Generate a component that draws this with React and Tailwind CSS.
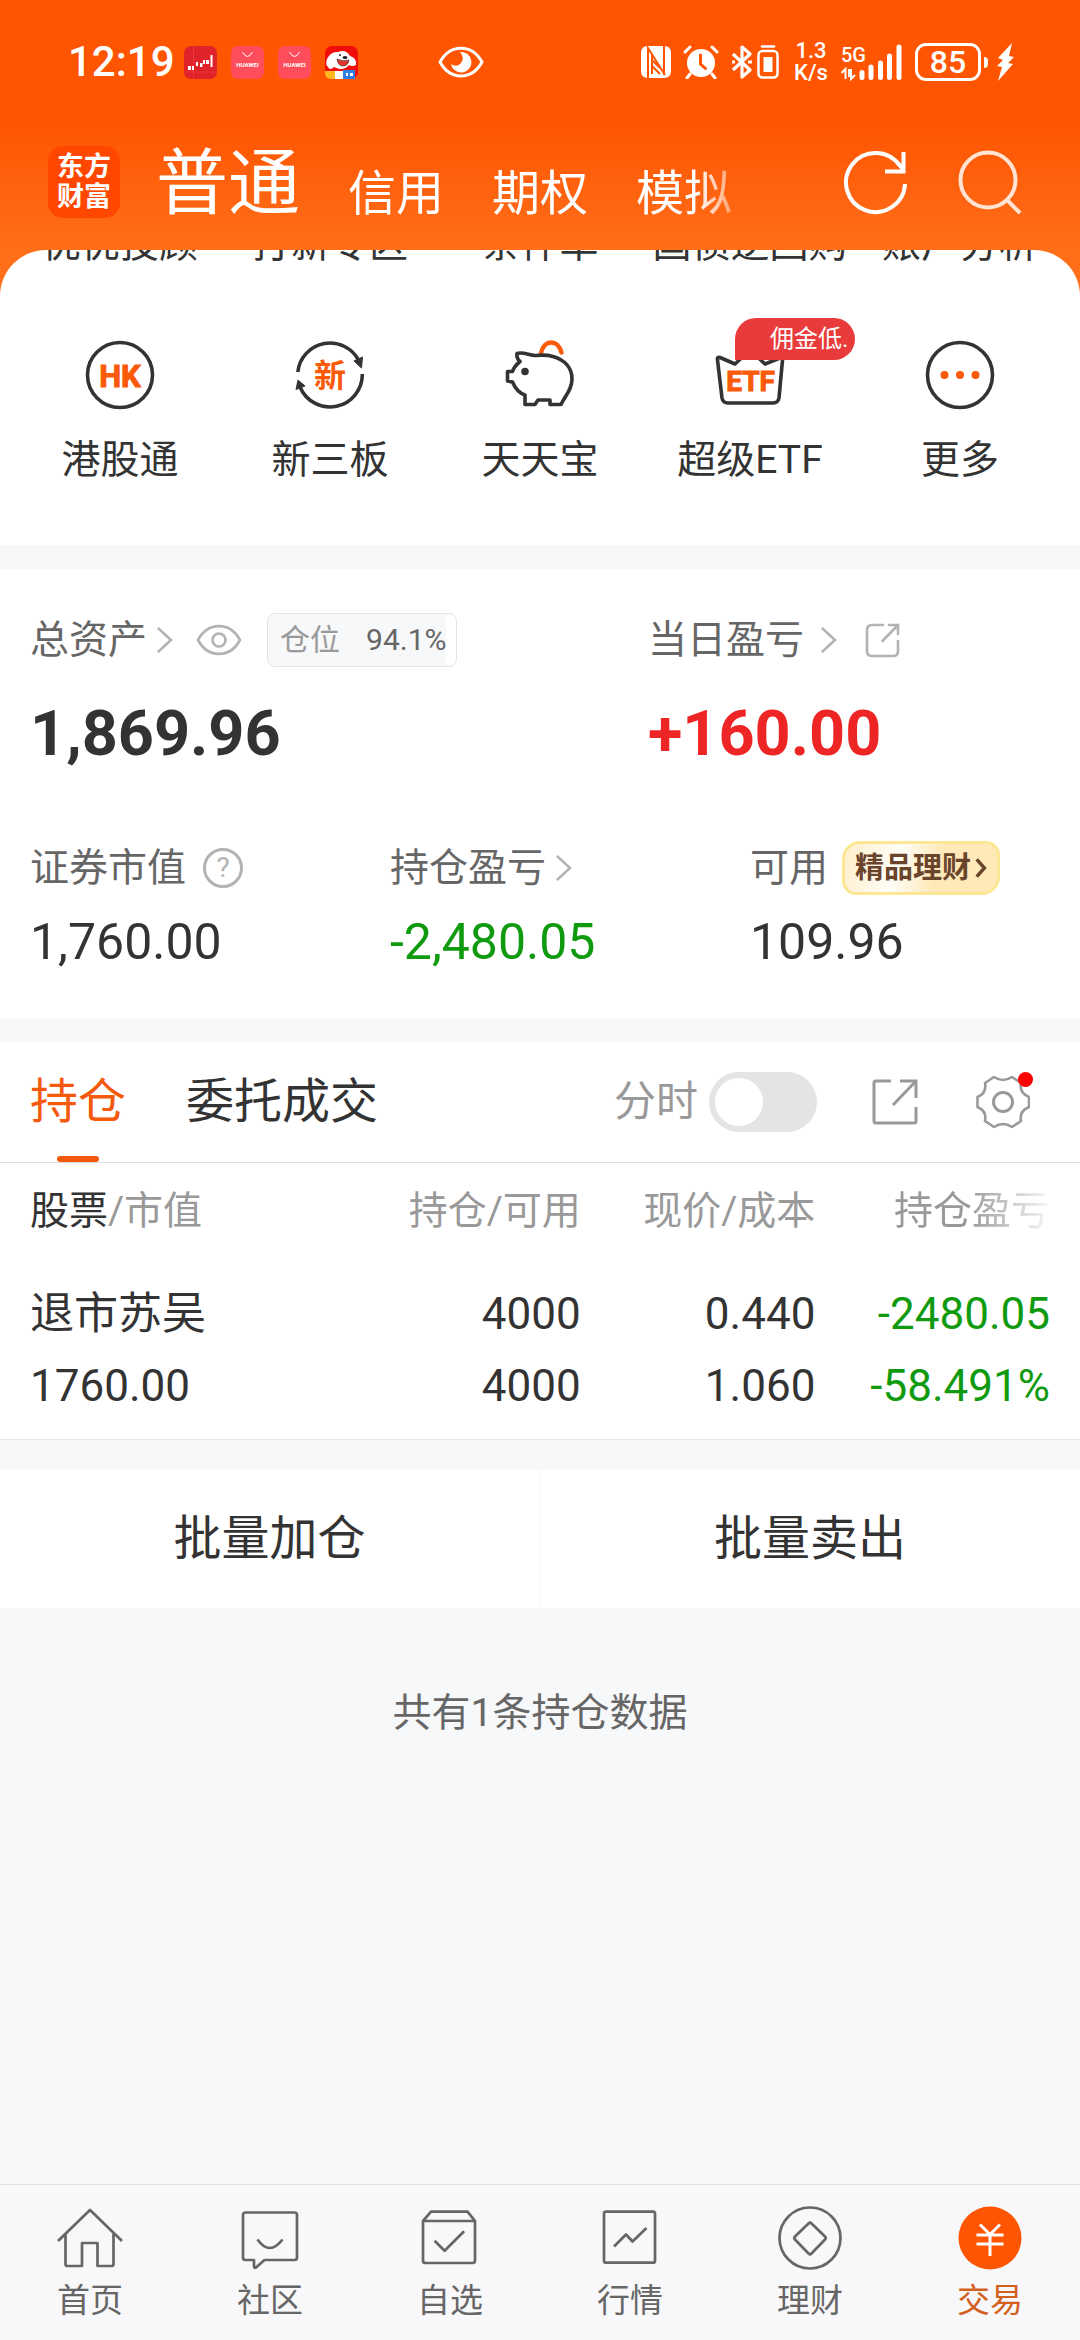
import { useState } from 'react';
import clsx from 'clsx';

const SHORTCUTS = [
    { above: '优优投顾', label: '港股通', icon: HkIcon },
    { above: '打新专区', label: '新三板', icon: NewBoardIcon },
    { above: '条件单', label: '天天宝', icon: PiggyIcon },
    { above: '国债逆回购', label: '超级ETF', icon: EtfIcon, badge: '佣金低.' },
    { above: '账户分析', label: '更多', icon: MoreIcon },
];

const POSITIONS = [
    { name: '退市苏吴', value: '1760.00', held: '4000', usable: '4000', price: '0.440', cost: '1.060', profit: '-2480.05', percent: '-58.491%' },
];

const NAV = [
    { label: '首页', icon: HomeIcon },
    { label: '社区', icon: ChatIcon },
    { label: '自选', icon: WatchIcon },
    { label: '行情', icon: MarketIcon },
    { label: '理财', icon: CoinIcon },
    { label: '交易', icon: TradeIcon, active: true },
];

/* ---------- shortcut icons ---------- */

function HkIcon() {
    return (
        <svg viewBox="0 0 70 70" className="size-[70px]" aria-hidden="true">
            <circle cx="35" cy="35" r="32.5" fill="none" stroke="#333" strokeWidth="3.6" />
            <text x="35" y="46.5" textAnchor="middle" fontSize="31" fontWeight="700" fill="#fa5a0a" stroke="#fa5a0a" strokeWidth="1">HK</text>
        </svg>
    );
}

function NewBoardIcon() {
    return (
        <svg viewBox="0 0 70 70" className="size-[70px]" aria-hidden="true">
            <g fill="none" stroke="#333" strokeWidth="3.6">
                <path d="M2.8 32A32.4 32.4 0 0 1 64 21" />
                <path d="M67.3 34A32.4 32.4 0 0 1 5 47" />
            </g>
            <path d="M59 21l8.5-4-1 11zM1 49.5l2-9.5 7 6z" fill="#333" stroke="#333" />
            <text x="35" y="46.5" textAnchor="middle" fontSize="32" fontWeight="700" fill="#fa5a0a">新</text>
        </svg>
    );
}

function PiggyIcon() {
    return (
        <svg viewBox="0 0 70 70" className="size-[70px]" fill="none" strokeLinecap="round" strokeLinejoin="round" aria-hidden="true">
            <path d="M36 13C39 -1 53 -1 56.5 12.5" stroke="#fa5a0a" strokeWidth="4.5" />
            <path
                d="M12 13.5C17 11.5 24 15 30 15.5C36 15 41 14.5 48 16.5C60 20 67 28 67 39C67 50 60 56 56 64.500H45V60H33L30 64.5H20V55C14 53 10 48 7.5 42L2.500 41V31.500H7.5C9 27 12 24 15 21.5C12 19 11.5 16.5 12 13.5Z"
                stroke="#333"
                strokeWidth="3.6"
            />
            <circle cx="20" cy="31.5" r="3.8" fill="#333" />
        </svg>
    );
}

function EtfIcon() {
    return (
        <svg viewBox="0 0 70 70" className="size-[70px]" aria-hidden="true">
            <path d="M5 17.5L20 24 35 10 50 24 65 18Q68 16.5 67.5 20L64 58Q63 63 58 63H13Q8 63 7 58L2.5 20Q2 16.5 5 17.5Z" fill="none" stroke="#333" strokeWidth="3.6" strokeLinejoin="round" />
            <text x="35.5" y="51" textAnchor="middle" fontSize="28" fontWeight="700" fill="#fa5a0a" stroke="#fa5a0a" strokeWidth="1">ETF</text>
        </svg>
    );
}

function MoreIcon() {
    return (
        <svg viewBox="0 0 70 70" className="size-[70px]" aria-hidden="true">
            <circle cx="35" cy="35" r="32.5" fill="none" stroke="#333" strokeWidth="3.6" />
            <g fill="#fa5a0a">
                <circle cx="19.5" cy="35" r="4" />
                <circle cx="35" cy="35" r="4" />
                <circle cx="50.5" cy="35" r="4" />
            </g>
        </svg>
    );
}

/* ---------- bottom bar icons ---------- */

function NavIcon({ children }) {
    return (
        <svg viewBox="0 0 66 66" className="size-[66px]" fill="none" stroke="#666" strokeWidth="2.7" strokeLinejoin="round" aria-hidden="true">
            {children}
        </svg>
    );
}

function HomeIcon() {
    return (
        <NavIcon>
            <path d="M1 36L33 5l32 31M8.5 29v30q0 2 2 2H25V38h15.5v23h14q2 0 2-2V29" />
        </NavIcon>
    );
}

function ChatIcon() {
    return (
        <NavIcon>
            <path d="M8.5 7.5h49q2.5 0 2.5 2.5v42.5q0 2.5-2.5 2.5h-30l-8.5 7.5q-2 1-2-1.5v-6H8.5Q6 55 6 52.5V10q0-2.500 2.5-2.5z" />
            <path d="M20.5 34.5q12 17 25 0" />
        </NavIcon>
    );
}

function WatchIcon() {
    return (
        <NavIcon>
            <path d="M6 16h52v39.5q0 2.5-2.5 2.5h-47Q6 58 6 55.5zL14 6.7h36.5L58 16" />
            <path d="M17.6 35.7l10 10 19.5-19.5" />
        </NavIcon>
    );
}

function MarketIcon() {
    return (
        <NavIcon>
            <rect x="7" y="6.7" width="51" height="51" rx="2" />
            <path d="M17 41.5l12-12 6.5 7L49.5 23" />
        </NavIcon>
    );
}

function CoinIcon() {
    return (
        <NavIcon>
            <circle cx="33" cy="33" r="30.5" />
            <path d="M31.5 18.5q1.5-1.5 3 0L48 31.5q1.5 1.5 0 3L34.5 48.5q-1.5 1.5-3 0L18 34.5q-1.5-1.5 0-3z" />
        </NavIcon>
    );
}

function TradeIcon() {
    return (
        <NavIcon>
            <circle cx="33" cy="33" r="31.5" fill="#ff5500" stroke="none" />
            <path d="M23 19.5l10 10 10-10M33 29.5V51M19.5 30h27M19.5 39h27" stroke="#fff" strokeWidth="3" />
        </NavIcon>
    );
}

/* ---------- small icons ---------- */

function Chevron() {
    return (
        <svg viewBox="0 0 16 28" className="h-7 w-4" fill="none" stroke="#b3b3b3" strokeWidth="2.5" strokeLinecap="round" aria-hidden="true">
            <path d="M1.5 2.5L14 14 1.5 25.5" />
        </svg>
    );
}

function EyeIcon() {
    return (
        <svg viewBox="0 0 46 32" className="h-8 w-[46px]" fill="none" stroke="#b3b3b3" strokeWidth="2.7" aria-hidden="true">
            <path d="M2 16C12-2.5 34-2.5 44 16C34 34.5 12 34.5 2 16Z" strokeLinejoin="round" />
            <circle cx="23" cy="16" r="6.5" />
        </svg>
    );
}

// Rounded version sits beside the daily profit, square one in the tab row
function ShareIcon({ rounded }) {
    if (rounded) {
        return (
            <svg viewBox="0 0 35 35" className="size-[35px]" fill="none" stroke="#b3b3b3" strokeWidth="2.6" strokeLinecap="round" aria-hidden="true">
                <path d="M18 2H7Q2 2 2 7v21q0 5 5 5h21q5 0 5-5V18" />
                <path d="M24 2h9v9M33 2L17.500 18" />
            </svg>
        );
    }
    return (
        <svg viewBox="0 0 46 46" className="size-[46px]" fill="none" stroke="#999" strokeWidth="3" aria-hidden="true">
            <path d="M19 2H4Q2 2 2 4v38q0 2 2 2h38q2 0 2-2V28" />
            <path d="M28 2h16v17M44 2L21 26" />
        </svg>
    );
}

function GearIcon() {
    return (
        <svg viewBox="0 0 54 54" className="size-[54px]" fill="none" stroke="#999" strokeWidth="2.6" strokeLinejoin="round" aria-hidden="true">
            <path d="M18 2Q27 8 36 2L45 8Q43 18 53 22V32Q43 36 45 46L36 52Q27 46 18 52L9 46Q11 36 1.5 32V22Q11 18 9 8Z" />
            <circle cx="27" cy="27" r="9.5" strokeWidth="3" />
        </svg>
    );
}

/* ---------- status bar ---------- */

function HuaweiApp() {
    return (
        <svg viewBox="0 0 33 33" className="size-[33px]" aria-hidden="true">
            <rect width="33" height="33" rx="7" fill="#ff4d5b" />
            <path d="M11.5 6q5 9 10 0" fill="none" stroke="#fff" strokeWidth="1" />
            <text x="16.5" y="21" textAnchor="middle" fontSize="6" fontWeight="700" fill="#fff">HUAWEI</text>
        </svg>
    );
}

function StatusBar() {
    return (
        <div className="flex h-[124px] items-center pr-[66px] pl-[68px] text-white">
            <span className="w-[116px] text-[42px] leading-[60px] font-medium">12:19</span>
            <div className="flex gap-[14px]">
                <svg viewBox="0 0 33 33" className="size-[33px]" aria-hidden="true">
                    <rect width="33" height="33" rx="7" fill="#e0222b" />
                    <path d="M0 26h33M9.5 0v33" stroke="#f04a4a" strokeWidth=".5" />
                    <path d="M4 20h3v4H4zM16 17h2.5v4H16zM22 14h3v4h-3z" fill="#fff" />
                    <path d="M9 20v4M13 16v4M20 14v4M27.5 9v12" stroke="#fff" strokeWidth="2" />
                </svg>
                <HuaweiApp />
                <HuaweiApp />
                <svg viewBox="0 0 33 33" className="size-[33px]" aria-hidden="true">
                    <rect width="33" height="33" rx="7" fill="#f20d0d" />
                    <path d="M2 13Q6 5 13 6Q21 3 25 10Q32 12 31 19Q27 21 24 19Q18 26 9 21Q5 25 3 21Q0 18 2 13Z" fill="#fff" />
                    <circle cx="15" cy="9" r="1" fill="#222" />
                    <ellipse cx="20" cy="11.5" rx="2.5" ry="1.6" fill="#222" />
                    <path d="M12 13q6 3 12 1q-1 6-6 6t-6-7z" fill="#e4342d" stroke="#222" strokeWidth=".6" />
                    <path d="M0 25h10v8H6q-5 0-6-5z" fill="#ffb81f" />
                    <path d="M10 25h9v8h-9z" fill="#fff" />
                    <path d="M18 24h12v9H18z" fill="#2e7fe0" />
                    <path d="M21 27h2v3h-2zM25 27h3v3h-3z" fill="#fff" />
                </svg>
            </div>
            <svg viewBox="0 0 46 32" className="ml-20 h-8 w-[46px]" aria-hidden="true">
                <path d="M2 16C12-2.5 34-2.5 44 16C34 34.5 12 34.5 2 16Z" fill="none" stroke="#fff" strokeWidth="3" strokeLinejoin="round" />
                <path d="M22 6a10.3 10.3 0 1 1-9 12q6 4 10-1t-1-11z" fill="#fff" />
            </svg>

            <div className="ml-auto flex items-center">
                <svg viewBox="0 0 32 34" className="h-[34px] w-8" aria-hidden="true">
                    <path d="M8 1h14l2 0q7 0 7 7v18q0 7-7 7H8q-7 0-7-7V8Q1 1 8 1z" fill="#fff" />
                    <path d="M8 33V3l17 27M24 1v29M12 9v20M12 15l8 8M12 21l8 8" fill="none" stroke="#ff5500" strokeWidth="2" />
                </svg>
                <svg viewBox="0 0 36 34" className="ml-[11px] h-[34px] w-9" fill="none" stroke="#fff" strokeWidth="3" strokeLinecap="round" aria-hidden="true">
                    <circle cx="18" cy="18" r="14" fill="#fff" stroke="none" />
                    <path d="M2 7l5-5M34 7l-5-5M7 29l-3 4M29 29l3 4" />
                    <path d="M17.5 10v9l5 4.5" stroke="#ff5500" />
                </svg>
                <svg viewBox="0 0 22 34" className="ml-3 h-[34px] w-[22px]" fill="none" stroke="#fff" strokeWidth="3.2" strokeLinejoin="round" aria-hidden="true">
                    <path d="M2 9l17 16-8 7V2l8 7L2 25" />
                    <path d="M1 17h3M17 17h4" />
                </svg>
                <svg viewBox="0 0 22 34" className="ml-1 h-[34px] w-[22px]" aria-hidden="true">
                    <path d="M5 1.5h12" stroke="#fff" strokeWidth="2.5" strokeLinecap="round" />
                    <rect x="1.5" y="6" width="19" height="26.5" rx="4" fill="none" stroke="#fff" strokeWidth="2.5" />
                    <rect x="6.5" y="12" width="9" height="15" fill="#fff" />
                </svg>
                <div className="ml-3 w-10 text-center text-[22px] leading-[22px] font-medium">
                    <div>1.3</div>
                    <div>K/s</div>
                </div>
                <svg viewBox="0 0 64 38" className="ml-[10px] h-[38px] w-16" aria-hidden="true">
                    <text x="0" y="19" fontSize="20" fontWeight="500" fill="#fff">5G</text>
                    <path d="M4.5 36V26l-4 4M10 26v10l4-4M8 26v8" fill="none" stroke="#fff" strokeWidth="2" />
                    <path d="M21 34.5v-5M30 34.5V24M39.5 34.5V20M48.5 34.5V13M58 34.5V4" stroke="#fff" strokeWidth="5" strokeLinecap="round" />
                </svg>
                <div className="ml-[10px] flex h-[38px] w-[66px] items-center justify-center rounded-[11px] border-[3px] border-white text-[32px] leading-8 font-medium">85</div>
                <div className="ml-[3px] h-[11px] w-1 rounded-r bg-white" />
                <svg viewBox="0 0 18 38" className="ml-2 h-[38px] w-[18px]" fill="#fff" aria-hidden="true">
                    <path d="M16 0L2 15l5 2-6 6 5 1-4 14 15-17-5-1 6-6-5-1z" />
                </svg>
            </div>
        </div>
    );
}

function Header() {
    return (
        <header className="bg-linear-to-b from-[#ff5500] from-50% to-[#ff6e19]">
            <StatusBar />
            <div className="flex h-[126px] items-center pr-[58px] pb-[10px] pl-12 text-white">
                <button type="button" className="size-[72px] rounded-[15px] bg-[#ff4700] text-[27px] leading-[30px] font-bold">
                    东方<br />财富
                </button>
                <nav className="ml-9 flex items-end gap-12 pt-1 [mask-image:linear-gradient(to_right,#000_540px,transparent_600px)]">
                    <button type="button" className="text-[72px] leading-[84px]">普通</button>
                    <button type="button" className="text-[48px] leading-[64px]">信用</button>
                    <button type="button" className="text-[48px] leading-[64px]">期权</button>
                    <button type="button" className="text-[48px] leading-[64px]">模拟</button>
                </nav>
                <button type="button" aria-label="刷新" className="ml-auto">
                    <svg viewBox="0 0 64 66" className="h-[66px] w-16" fill="none" stroke="#fff" strokeWidth="4" aria-hidden="true">
                        <path d="M61 35A29.5 29.5 0 1 1 56 17" />
                        <path d="M59.5 3v19.5H41M54 14l5.5 7" />
                    </svg>
                </button>
                <button type="button" aria-label="搜索" className="ml-[50px]">
                    <svg viewBox="0 0 64 66" className="h-[66px] w-16" fill="none" stroke="#ffe4d3" strokeWidth="4" aria-hidden="true">
                        <circle cx="30" cy="31" r="27.5" />
                        <path d="M49 51l13 13" />
                    </svg>
                </button>
            </div>
        </header>
    );
}

function Shortcuts() {
    return (
        <section className="overflow-hidden rounded-t-[46px] bg-white px-[15px] pb-[55px]">
            {/* row scrolled almost out of view */}
            <div className="grid h-4 grid-cols-5 content-end justify-items-center overflow-hidden">
                {SHORTCUTS.map(s => (
                    <span key={s.above} className="leading-[44px] whitespace-nowrap">{s.above}</span>
                ))}
            </div>
            <div className="mt-[74px] grid grid-cols-5">
                {SHORTCUTS.map(({ label, icon: Icon, badge }) => (
                    <button key={label} type="button" className="flex flex-col items-center">
                        <span className="relative">
                            <Icon />
                            {badge && (
                                <span className="absolute -top-[22px] left-5 h-[42px] w-[120px] rounded-[21px] rounded-bl-none bg-[#e93b3b] pl-[35px] text-left text-[24px] leading-[42px] text-white">{badge}</span>
                            )}
                        </span>
                        <span className="mt-5 leading-[60px]">{label}</span>
                    </button>
                ))}
            </div>
        </section>
    );
}

function Assets() {
    return (
        <section className="mt-6 bg-white px-[30px] pt-11 pb-[46px] text-[#666]">
            <div className="flex">
                <div className="w-[618px]">
                    <div className="flex h-[54px] items-center">
                        <a href="#assets" className="flex items-center gap-[10px]">总资产 <Chevron /></a>
                        <button type="button" aria-label="隐藏金额" className="ml-[23px]"><EyeIcon /></button>
                        <div className="ml-[25px] overflow-hidden rounded-lg border border-[#e4e4e6] pr-[10px] text-[30px] leading-[52px]">
                            <div className="flex gap-[26px] bg-[#f7f8fa] pl-3">
                                <span className="text-[#999]">仓位</span>
                                <span>94.1%</span>
                            </div>
                        </div>
                    </div>
                    <div className="mt-[31px] text-[63px] leading-[72px] font-bold text-[#333]">1,869.96</div>
                </div>
                <div>
                    <div className="flex h-[54px] items-center">
                        <a href="#today" className="flex items-center gap-[17px]">当日盈亏 <Chevron /></a>
                        <button type="button" aria-label="分享" className="ml-7"><ShareIcon rounded /></button>
                    </div>
                    <div className="mt-[31px] text-[63px] leading-[72px] font-bold text-[#ee2525]">+160.00</div>
                </div>
            </div>

            <div className="mt-[71px] flex">
                <div className="w-[360px]">
                    <div className="flex h-[54px] items-center gap-[17px]">
                        证券市值
                        <button type="button" className="flex size-10 items-center justify-center rounded-full border-[3px] border-[#b3b3b3] text-[28px] leading-none text-[#b3b3b3]">?</button>
                    </div>
                    <div className="mt-[17px] text-[50px] leading-[60px] text-[#333]">1,760.00</div>
                </div>
                <div className="w-[360px]">
                    <a href="#profit" className="flex h-[54px] items-center gap-[10px]">持仓盈亏 <Chevron /></a>
                    <div className="mt-[17px] text-[50px] leading-[60px] text-[#109a10]">-2,480.05</div>
                </div>
                <div>
                    <div className="flex h-[54px] items-center gap-[14px]">
                        可用
                        <a href="#wealth" className="flex h-[54px] items-center gap-1 rounded-[14px] rounded-tl-[18px] rounded-br-[18px] border-[3px] border-[#fbe794] bg-linear-105 from-[#ffefca] via-[#fffdf8] via-35% to-[#ffe9b8] to-60% px-[10px] text-[29px] font-bold text-[#6b452b]">
                            精品理财
                            <svg viewBox="0 0 14 24" className="h-6 w-3" fill="none" stroke="#6b452b" strokeWidth="4" aria-hidden="true">
                                <path d="M2 2l9 10-9 10" />
                            </svg>
                        </a>
                    </div>
                    <div className="mt-[17px] text-[50px] leading-[60px] text-[#333]">109.96</div>
                </div>
            </div>
        </section>
    );
}

function Positions() {
    const [intraday, setIntraday] = useState(false);

    return (
        <section className="mt-6 border-b border-[#e8e8ea] bg-white">
            <div className="flex h-[121px] items-center border-b border-[#dcdcde] pr-[50px] pl-[30px] text-[48px]">
                <button type="button" className="relative h-[120px] text-[#f4590c]">
                    持仓
                    <span className="absolute bottom-0 left-1/2 h-[6px] w-[42px] -translate-x-1/2 rounded-[3px] bg-[#f4590c]" />
                </button>
                <button type="button" className="ml-[60px]">委托成交</button>
                <label className="ml-auto flex items-center gap-[11px] text-[42px] text-[#999]">
                    分时
                    <input
                        type="checkbox"
                        checked={intraday}
                        onChange={(e) => setIntraday(e.target.checked)}
                        className="flex h-[60px] w-[108px] appearance-none items-center rounded-full bg-[#e4e4e6] px-[6px] before:size-12 before:rounded-full before:bg-white checked:justify-end checked:bg-[#f4590c]"
                    />
                </label>
                <button type="button" aria-label="分享" className="ml-[55px]"><ShareIcon /></button>
                <button type="button" aria-label="设置" className="relative ml-[58px]">
                    <GearIcon />
                    <span className="absolute -top-[3px] -right-[3px] size-[15px] rounded-full bg-[#ff0000]" />
                </button>
            </div>

            <div className="px-[30px]">
                <table className="w-full table-fixed">
                    <thead>
                        <tr className="h-24 text-right text-[#999]">
                            <th className="w-[31%] text-left font-normal"><span className="text-[#333]">股票</span>/市值</th>
                            <th className="w-[23%] font-normal">持仓/可用</th>
                            <th className="w-[23%] font-normal">现价/成本</th>
                            <th className="w-[23%] font-normal [mask-image:linear-gradient(to_right,#000_65%,transparent_103%)]">持仓盈亏</th>
                        </tr>
                    </thead>
                    <tbody className="text-[44px] leading-[72px]">
                        {POSITIONS.map(p => (
                            <tr key={p.name} className="text-right">
                                <td className="pt-[19px] pb-[17px] text-left"><div>{p.name}</div><div>{p.value}</div></td>
                                <td className="pt-[19px] pb-[17px]"><div>{p.held}</div><div>{p.usable}</div></td>
                                <td className="pt-[19px] pb-[17px]"><div>{p.price}</div><div>{p.cost}</div></td>
                                <td className="pt-[19px] pb-[17px] text-[#109a10]"><div>{p.profit}</div><div>{p.percent}</div></td>
                            </tr>
                        ))}
                    </tbody>
                </table>
            </div>
        </section>
    );
}

function BottomNav() {
    return (
        <nav className="mt-auto grid grid-cols-6 border-t border-[#e0e0e2] bg-[#f8f8fa] pt-5 pb-3">
            {NAV.map(({ label, icon: Icon, active }) => (
                <a key={label} href={`#${label}`} className={clsx('flex flex-col items-center gap-[3px] text-[33px] leading-[54px]', active ? 'text-[#d2601e]' : 'text-[#666]')}>
                    <Icon />
                    {label}
                </a>
            ))}
        </nav>
    );
}

export default function App() {
    return (
        <div className="flex min-h-screen flex-col bg-[#f7f8fa] font-[Roboto,'Noto_Sans_CJK_SC',sans-serif] text-[39px] leading-[54px] text-[#333]">
            <Header />
            <div className="bg-[#ff6e19]">
                <Shortcuts />
            </div>
            <Assets />
            <Positions />
            <div className="mt-[30px] grid grid-cols-2 divide-x divide-[#f5f5f6] bg-white text-[48px]">
                <button type="button" className="h-[138px]">批量加仓</button>
                <button type="button" className="h-[138px]">批量卖出</button>
            </div>
            <p className="mt-[78px] text-center text-[#666]">共有1条持仓数据</p>
            <BottomNav />
        </div>
    );
}
